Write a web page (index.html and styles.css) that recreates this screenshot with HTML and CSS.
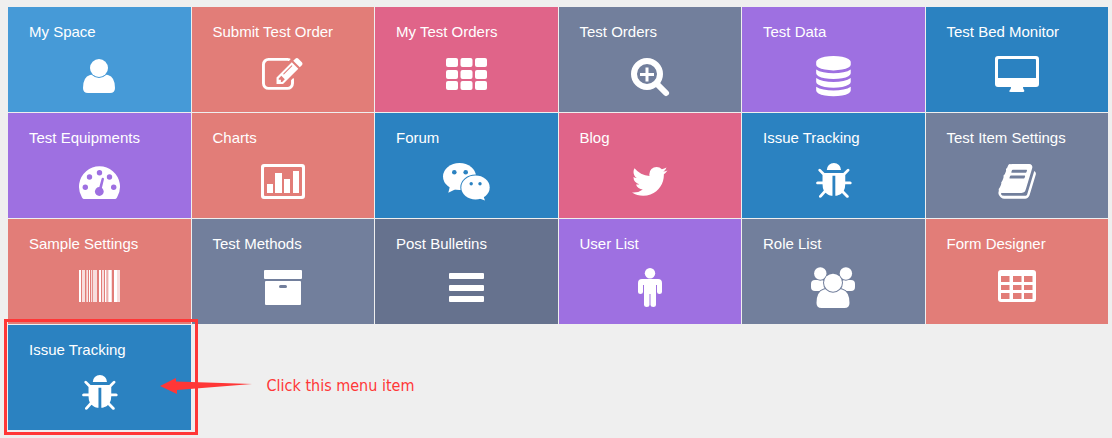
FILE: index.html
```html
<!DOCTYPE html>
<html lang="en">
<head>
<meta charset="utf-8">
<title>Menu</title>
<link rel="stylesheet" href="styles.css">
</head>
<body>
<nav class="tiles" aria-label="Main menu">
  <a class="tile sky" href="#"><span class="label">My Space</span>
    <svg class="icon" viewBox="0 0 48 48"><path d="M15 23q3-1 4 0 5 3 10 0 1-1 4 0 7 2 7 13 0 5-5 5H13q-5 0-5-5 0-11 7-13z"/><circle class="gap" cx="24" cy="16" r="9"/></svg></a>
  <a class="tile salmon" href="#"><span class="label">Submit Test Order</span>
    <svg class="icon" viewBox="0 0 48 48"><path transform="translate(3 3) scale(.0227)" d="M888 1184l116-116-152-152-116 116v56h96v96h56zm440-720q-16-16-33 1l-350 350q-17 17-1 33t33-1l350-350q17-17 1-33zm80 594v190q0 119-84.5 203.5t-203.5 84.5h-832q-119 0-203.5-84.5t-84.5-203.5v-832q0-119 84.5-203.5t203.5-84.5h832q63 0 117 25 15 7 18 23 3 17-9 29l-49 49q-14 14-32 8-23-6-45-6h-832q-66 0-113 47t-47 113v832q0 66 47 113t113 47h832q66 0 113-47t47-113v-126q0-13 9-22l64-64q15-15 35-7t20 29zm-96-738l288 288-672 672h-288v-288zm444 132l-92 92-288-288 92-92q28-28 68-28t68 28l152 152q28 28 28 68t-28 68z"/></svg></a>
  <a class="tile pink" href="#"><span class="label">My Test Orders</span>
    <svg class="icon" viewBox="0 0 48 48"><g><rect x="4" y="6" width="12" height="9" rx="2"/><rect x="18.500" y="6" width="12" height="9" rx="2"/><rect x="33" y="6" width="12" height="9" rx="2"/><rect x="4" y="18" width="12" height="9" rx="2"/><rect x="18.500" y="18" width="12" height="9" rx="2"/><rect x="33" y="18" width="12" height="9" rx="2"/><rect x="4" y="29" width="12" height="9" rx="2"/><rect x="18.500" y="29" width="12" height="9" rx="2"/><rect x="33" y="29" width="12" height="9" rx="2"/></g></svg></a>
  <a class="tile slate" href="#"><span class="label">Test Orders</span>
    <svg class="icon line" viewBox="0 0 48 48"><circle cx="21" cy="22" r="13" stroke-width="6"/><path d="M31 32l9 9" stroke-width="6" stroke-linecap="round"/><path d="M14 22.500h14M21 15.500v14" stroke-width="3"/></svg></a>
  <a class="tile purple" href="#"><span class="label">Test Data</span>
    <svg class="icon" viewBox="0 0 48 48"><path transform="translate(4.300 4) scale(.0225)" d="M896 768q237 0 443-43t325-127v170q0 69-103 128t-280 93.500-385 34.500-385-34.500-280-93.500-103-128v-170q119 84 325 127t443 43zm0 768q237 0 443-43t325-127v170q0 69-103 128t-280 93.500-385 34.500-385-34.500-280-93.500-103-128v-170q119 84 325 127t443 43zm0-384q237 0 443-43t325-127v170q0 69-103 128t-280 93.500-385 34.500-385-34.500-280-93.500-103-128v-170q119 84 325 127t443 43zm0-1152q208 0 385 34.500t280 93.500 103 128v128q0 69-103 128t-280 93.500-385 34.500-385-34.500-280-93.500-103-128v-128q0-69 103-128t280-93.500 385-34.500z"/></svg></a>
  <a class="tile blue" href="#"><span class="label">Test Bed Monitor</span>
    <svg class="icon" viewBox="0 0 48 48"><path fill-rule="evenodd" d="M5 4h38q3 0 3 3v25q0 3-3 3H30q0 2 1 3 1 2-1 2H18q-3 0-1-2 1-1 1-3H5q-3 0-3-3V7q0-3 3-3zm1 3q-1 0-1 1v18h38V8q0-1-1-1z"/></svg></a>

  <a class="tile purple" href="#"><span class="label">Test Equipments</span>
    <svg class="icon" viewBox="0 0 48 48"><path d="M9 41q-1 0-2-1.500A20.500 20.500 0 1 1 42 39.500q-1 1.500-2 1.500z"/><g class="cut"><circle cx="10.300" cy="29.300" r="2.700"/><circle cx="14.500" cy="19" r="2.700"/><circle cx="24.500" cy="14.700" r="2.700"/><circle cx="34.500" cy="19" r="2.700"/><circle cx="38.700" cy="29.300" r="2.700"/><circle cx="24.300" cy="33.500" r="4.400"/><path d="M23.500 32l3-11q.4-1.500 1.500-1.200 1.200.3.900 1.800l-2.600 11z"/></g></svg></a>
  <a class="tile salmon" href="#"><span class="label">Charts</span>
    <svg class="icon" viewBox="0 0 48 48"><path fill-rule="evenodd" d="M5 6h38q3 0 3 3v29q0 3-3 3H5q-3 0-3-3V9q0-3 3-3zm1 3q-1 0-1 1v27q0 1 1 1h36q1 0 1-1V10q0-1-1-1z"/><path d="M8 26h6v9H8zM16 15h7v20h-7zM25 21h6v14h-6zM34 13h6v22h-6z"/></svg></a>
  <a class="tile blue" href="#"><span class="label">Forum</span>
    <svg class="icon" viewBox="0 0 48 48"><ellipse cx="17.500" cy="18.500" rx="16.500" ry="13.500"/><path d="M8 28l-1.700 6.700L14 31z"/><ellipse class="gap" cx="33.500" cy="29.500" rx="14.200" ry="11.900"/><path d="M36 40l7 2.500-2-5.500z"/><g class="cut"><circle cx="12.300" cy="14.200" r="2.300"/><circle cx="23.700" cy="14.200" r="2.300"/><circle cx="29.200" cy="25.700" r="1.700"/><circle cx="38" cy="25.700" r="1.700"/></g></svg></a>
  <a class="tile pink" href="#"><span class="label">Blog</span>
    <svg class="icon" viewBox="0 0 48 48"><path transform="translate(3.600 3.200) scale(.0225)" d="M1684 408q-67 98-162 167 1 14 1 42 0 130-38 259.500t-115.500 248.500-184.500 210.500-258 146-323 54.500q-271 0-496-145 35 4 78 4 225 0 401-138-105-2-188-64.500t-114-159.500q33 5 61 5 43 0 85-11-112-23-185.500-111.500t-73.500-205.500v-4q68 38 146 41-66-44-105-115t-39-154q0-88 44-163 121 149 294.500 238.500t371.500 99.500q-8-38-8-74 0-134 94.500-228.500t228.500-94.500q140 0 236 102 109-21 205-78-37 115-142 178 93-10 186-50z"/></svg></a>
  <a class="tile blue" href="#"><span class="label">Issue Tracking</span>
    <svg class="icon" viewBox="0 0 48 48"><path id="bug" transform="translate(5 3.600) scale(.0222)" d="M1696 960q0 26-19 45t-45 19h-224q0 171-67 290l208 209q19 19 19 45t-19 45q-18 19-45 19t-45-19l-198-197q-5 5-15 13t-42 28.500-65 36.500-82 29-97 13v-896h-128v896q-51 0-101.500-13.500t-87-33-66-39-43.500-32.500l-15-14-183 207q-20 21-48 21-24 0-43-16-19-18-20.500-44.500t15.500-46.500l202-227q-58-114-58-274h-224q-26 0-45-19t-19-45 19-45 45-19h224v-294l-173-173q-19-19-19-45t19-45 45-19 45 19l173 173h844l173-173q19-19 45-19t45 19 19 45-19 45l-173 173v294h224q26 0 45 19t19 45zm-480-576h-640q0-133 93.500-226.500t226.500-93.500 226.500 93.500 93.500 226.500z"/></svg></a>
  <a class="tile slate" href="#"><span class="label">Test Item Settings</span>
    <svg class="icon" viewBox="0 0 48 48"><path transform="translate(4 3.200) scale(.0225)" d="M1703 478q40 57 18 129l-275 906q-19 64-76.500 107.500t-122.500 43.500h-923q-77 0-148.500-53.500t-99.500-131.500q-24-67-2-127 0-4 3-27t4-37q1-8-3-21.500t-3-19.500q2-11 8-21t16.500-23.500 16.500-23.500q23-38 45-91.500t30-91.500q3-10 .5-30t-.5-28q3-11 17-28t17-23q21-36 42-92t25-90q1-9-2.500-32t.5-28q4-13 22-30.500t22-22.500q19-26 42.500-84.500t27.500-96.500q1-8-3-25.500t-2-26.500q2-8 9-18t18-23 17-21q8-12 16.500-30.500t15-35 16-36 19.500-32 26.500-23.500 36-11.500 47.500 5.500l-1 3q38-9 51-9h761q74 0 114 56t18 130l-274 906q-36 119-71.500 153.500t-128.500 34.500h-869q-27 0-38 15-11 16-1 43 24 70 144 70h923q29 0 56-15.500t35-41.500l300-987q7-22 5-57 38 15 59 43zm-1064 2q-4 13 2 22.500t20 9.500h608q13 0 25.500-9.500t16.500-22.500l21-64q4-13-2-22.500t-20-9.500h-608q-13 0-25.500 9.500t-16.500 22.500zm-83 256q-4 13 2 22.500t20 9.500h608q13 0 25.500-9.500t16.500-22.500l21-64q4-13-2-22.500t-20-9.500h-608q-13 0-25.500 9.500t-16.500 22.500z"/></svg></a>

  <a class="tile salmon" href="#"><span class="label">Sample Settings</span>
    <svg class="icon" viewBox="0 0 48 48"><path d="M4 6h2v32H4zM11.500 6h1.300v32h-1.300zM14 6h1v32h-1zM24 6h2v32h-2zM30 6h1.500v32H30zM34 6h2v32h-2zM39 6h3v32h-3z"/><path opacity=".75" d="M7 6h3v32H7zM16 6h1.200v32H16zM18 6h4v32h-4zM27 6h2v32h-2zM32.500 6H37v32h-4.500zM42 6h3v32h-3z"/></svg></a>
  <a class="tile slate" href="#"><span class="label">Test Methods</span>
    <svg class="icon" viewBox="0 0 48 48"><rect x="5" y="6" width="38" height="9" rx="1"/><rect x="6" y="17" width="36" height="24" rx="1"/><rect class="cut" x="20" y="21" width="8" height="3" rx="1.500"/></svg></a>
  <a class="tile ink" href="#"><span class="label">Post Bulletins</span>
    <svg class="icon" viewBox="0 0 48 48"><rect x="7" y="9" width="35" height="6" rx="1"/><rect x="7" y="21" width="35" height="6" rx="1"/><rect x="7" y="32" width="35" height="6" rx="1"/></svg></a>
  <a class="tile purple" href="#"><span class="label">User List</span>
    <svg class="icon" viewBox="0 0 48 48"><circle cx="24" cy="9.200" r="5.200"/><path d="M16 15h16q4 0 4 4v9q0 2-2.500 2T31 28v-7h-1v20q0 2-2.700 2T24.500 41V30h-1v11q0 2-2.700 2T18 41V21h-1v7q0 2-2.500 2T12 28v-9q0-4 4-4z"/></svg></a>
  <a class="tile slate" href="#"><span class="label">Role List</span>
    <svg class="icon" viewBox="0 0 48 48"><rect x="2" y="16" width="14" height="11" rx="4"/><rect x="32" y="16" width="14" height="11" rx="4"/><circle class="gap" cx="11.300" cy="9.500" r="6.200"/><circle class="gap" cx="36.900" cy="9.500" r="6.200"/><path class="gap" d="M15 25.500q2-1 4 0 5 3 10 0 2-1 4 0 7.500 2 7.500 13.500 0 5-5 5h-23q-5 0-5-5Q7.500 27.500 15 25.500z"/><circle class="gap" cx="24" cy="18.700" r="9"/></svg></a>
  <a class="tile salmon" href="#"><span class="label">Form Designer</span>
    <svg class="icon" viewBox="0 0 48 48"><rect x="5" y="6" width="38" height="32" rx="3"/><path class="cut" d="M8 12h8.500v6H8zM20 12h8.500v6H20zM31 12h8.500v6H31zM8 21h8.500v5H8zM20 21h8.500v5H20zM31 21h8.500v5H31zM8 29h8.500v6H8zM20 29h8.500v6H20zM31 29h8.500v6H31z"/></svg></a>

  <a class="tile blue marked" href="#"><span class="label">Issue Tracking</span>
    <svg class="icon" viewBox="0 0 48 48"><use href="#bug"/></svg></a>
  <p class="callout">
    <svg class="arrow" viewBox="0 0 92 16"><path d="M0 8L16 0v3.500L92 6 17 12v4z"/></svg>
    Click this menu item
  </p>
</nav>
</body>
</html>
```
FILE: styles.css
```css
body {
  margin: 0;
  padding: 7px 4px 7px 8px;
  background: #efefef;
  font-family: "Liberation Sans", Arial, sans-serif;
}

.tiles {
  display: grid;
  grid-template-columns: repeat(6, 1fr);
  gap: 1px;
}

.tile {
  --tile: #2b82c1;
  position: relative;
  display: flex;
  flex-direction: column;
  gap: 11px;
  padding: 16px 21px 12px;
  background: var(--tile);
  color: #fff;
  font-size: 15px;
  line-height: 18px;
  text-decoration: none;
}

.sky { --tile: #469ad7; }
.salmon { --tile: #e27d78; }
.pink { --tile: #e06489; }
.slate { --tile: #727f9c; }
.purple { --tile: #9e70e1; }
.ink { --tile: #66728e; }

.icon {
  align-self: center;
  width: 48px;
  height: 48px;
  fill: currentColor;
}

.icon.line {
  fill: none;
  stroke: currentColor;
}

.cut { fill: var(--tile); }

.gap {
  stroke: var(--tile);
  stroke-width: 2px;
  paint-order: stroke;
}

.marked::after {
  content: "";
  position: absolute;
  inset: -6px -7px -5px -4px;
  border: 3px solid #ff3737;
}

.callout {
  position: relative;
  grid-column: 2 / -1;
  display: flex;
  align-items: center;
  margin: 0;
  padding: 16px 0 0 75px;
  color: #ff3737;
  font-family: "DejaVu Sans Condensed", "Noto Sans", sans-serif;
  font-size: 16px;
  line-height: 20px;
}

.arrow {
  position: absolute;
  left: -32px;
  width: 92px;
  height: 16px;
  fill: currentColor;
}
```
